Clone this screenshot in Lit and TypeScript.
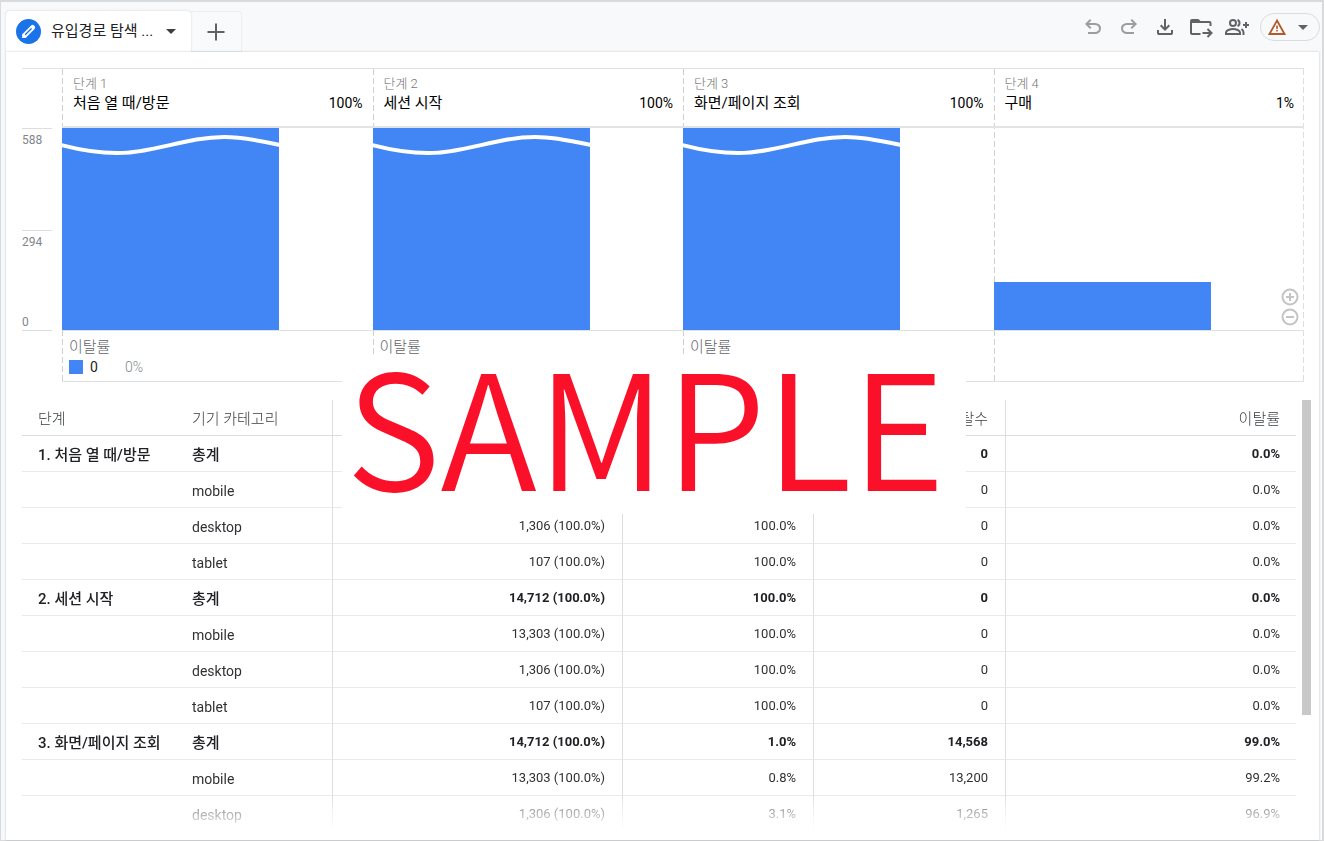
import { LitElement, html, css, svg } from "lit";
import { customElement } from "lit/decorators.js";
import { classMap } from "lit/directives/class-map.js";

interface Step {
  label: string;
  name: string;
  rate: string;
  height: number;
  wave: boolean;
  dropTitle?: string;
  dropCount?: string;
  dropRate?: string;
}

interface Row {
  step: string;
  device: string;
  users: string;
  completion: string;
  drops: string;
  dropRate: string;
}

const STEPS: Step[] = [
  { label: "단계 1", name: "처음 열 때/방문", rate: "100%", height: 100, wave: true, dropTitle: "이탈률", dropCount: "0", dropRate: "0%" },
  { label: "단계 2", name: "세션 시작", rate: "100%", height: 100, wave: true, dropTitle: "이탈률" },
  { label: "단계 3", name: "화면/페이지 조회", rate: "100%", height: 100, wave: true, dropTitle: "이탈률" },
  { label: "단계 4", name: "구매", rate: "1%", height: 24, wave: false },
];

const row = (step: string, device: string, users: string, completion: string, drops: string, dropRate: string): Row => ({
  step, device, users, completion, drops, dropRate,
});

const ROWS: Row[] = [
  row("1. 처음 열 때/방문", "총계", "", "", "0", "0.0%"),
  row("", "mobile", "", "", "0", "0.0%"),
  row("", "desktop", "1,306 (100.0%)", "100.0%", "0", "0.0%"),
  row("", "tablet", "107 (100.0%)", "100.0%", "0", "0.0%"),
  row("2. 세션 시작", "총계", "14,712 (100.0%)", "100.0%", "0", "0.0%"),
  row("", "mobile", "13,303 (100.0%)", "100.0%", "0", "0.0%"),
  row("", "desktop", "1,306 (100.0%)", "100.0%", "0", "0.0%"),
  row("", "tablet", "107 (100.0%)", "100.0%", "0", "0.0%"),
  row("3. 화면/페이지 조회", "총계", "14,712 (100.0%)", "1.0%", "14,568", "99.0%"),
  row("", "mobile", "13,303 (100.0%)", "0.8%", "13,200", "99.2%"),
  row("", "desktop", "1,306 (100.0%)", "3.1%", "1,265", "96.9%"),
];

const UNDO =
  "M280-200v-80h284q63 0 109.5-40T720-420q0-60-46.5-100T564-560H312l104 104-56 56-200-200 200-200 56 56-104 104h252q97 0 169.5 63T800-420q0 94-72.5 157T564-200H280Z";
const DOWNLOAD =
  "M480-320 280-520l56-58 104 104v-326h80v326l104-104 56 58-200 200ZM240-160q-33 0-56.5-23.5T160-240v-120h80v120h480v-120h80v120q0 33-23.5 56.5T720-160H240Z";

const symbol = (shape: unknown) => html`<svg class="icon" viewBox="0 -960 960 960" aria-hidden="true">${shape}</svg>`;
const glyph = (shape: unknown) => html`<svg class="icon" viewBox="0 0 24 24" aria-hidden="true">${shape}</svg>`;

const ICONS = {
  undo: symbol(svg`<path d=${UNDO}></path>`),
  redo: symbol(svg`<path transform="translate(960 0) scale(-1 1)" d=${UNDO}></path>`),
  download: symbol(svg`<path d=${DOWNLOAD}></path>`),
  folder: glyph(svg`
    <path fill="none" stroke="currentColor" stroke-width="2" stroke-linejoin="round"
      d="M11.500 19H3q-1 0-1-1V6q0-1 1-1H9l2 2h9.500q1 0 1 1v3"></path>
    <path d="M2 5h8l2 3H2z"></path>
    <path fill="none" stroke="currentColor" stroke-width="2" d="M13.500 18H22M18.500 14l4 4-4 4"></path>`),
  people: glyph(svg`
    <g fill="none" stroke="currentColor" stroke-width="2">
      <circle cx="8" cy="8" r="3"></circle>
      <path d="M1 19v-1.500c0-2 4-3.500 7-3.500s7 1.500 7 3.500V19z"></path>
      <path d="M12.500 5q2 .6 2 3t-2 3"></path>
      <path d="M16.500 14q2 1.500 2 3.500V20"></path>
      <path d="M21 7v6M18 10h6"></path>
    </g>`),
};

const caret = html`<svg class="caret" viewBox="0 0 10 5" aria-hidden="true"><path d="M0 0h10L5 5z"></path></svg>`;

@customElement("app-root")
export class AppRoot extends LitElement {
  static styles = css`
    :host {
      min-height: 100vh;
      box-sizing: border-box;
      border: 1px solid #d9dadb;
      border-top-width: 2px;
      border-right-width: 2px;
      background: #f8f9fa;
      color: #202124;
      font: 14px/20px Roboto, "Noto Sans CJK KR", sans-serif;
      padding: 0 2px 0 5px;
      display: flex;
      flex-direction: column;
    }
    * {
      box-sizing: border-box;
    }
    button {
      font: inherit;
      color: inherit;
      background: none;
      border: 0;
      padding: 0;
      display: flex;
      align-items: center;
      justify-content: center;
      cursor: pointer;
    }
    .icon {
      width: 24px;
      height: 24px;
      display: block;
      fill: currentColor;
    }
    .caret {
      width: 10px;
      height: 5px;
      display: block;
      fill: currentColor;
    }

    .topbar {
      display: flex;
      justify-content: space-between;
      align-items: flex-start;
      height: 50px;
    }
    .tabs {
      display: flex;
      align-self: flex-end;
      height: 41px;
    }
    .tab {
      width: 185px;
      padding: 0 15px 0 10px;
      justify-content: flex-start;
      gap: 10px;
      background: #fff;
      border-radius: 4px 4px 0 0;
      box-shadow: 0 0 2px rgba(60, 64, 67, 0.25);
      clip-path: inset(-2px -2px 0 -2px);
      font-size: 15px;
    }
    .tab span {
      padding-bottom: 2px;
    }
    .tab .caret {
      margin-left: auto;
      color: #3c4043;
    }
    .badge {
      width: 25px;
      height: 25px;
      flex: none;
    }
    .add {
      width: 51px;
      background: #f9fafb;
      border: 1px solid #eceef0;
      border-left: 0;
      border-radius: 0 4px 0 0;
      color: #5f6368;
    }
    .tools {
      display: flex;
      align-items: center;
      gap: 12px;
      padding-top: 11px;
      color: #5f6368;
    }
    .muted {
      color: #9a9da1;
    }
    .status {
      width: 60px;
      height: 28px;
      border: 1px solid #dadce0;
      border-radius: 14px;
      justify-content: space-between;
      padding: 0 11px 0 7px;
      margin-left: -1px;
    }
    .status .warn {
      width: 18px;
      height: 18px;
      color: #b45a2a;
    }

    .panel {
      flex: 1;
      position: relative;
      background: #fff;
      box-shadow: 0 0 2px rgba(60, 64, 67, 0.3);
      padding: 16px 8px 7px 16px;
      margin-right: 1px;
    }

    .funnel {
      display: grid;
      grid-template-columns: 40px 1fr;
      grid-template-rows: 60px 203px 51px;
      margin-right: 7px;
      position: relative;
    }
    .corner {
      border-top: 1px solid #e3e4e5;
    }
    .axis {
      grid-column: 1;
      grid-row: 2;
      margin-right: 10px;
      display: grid;
      grid-template-rows: 1fr 1fr;
      border-top: 1px solid #dcdddf;
      border-bottom: 1px solid #dcdddf;
      color: #80868b;
      font-size: 12px;
      line-height: 22px;
    }
    .axis-lower {
      display: flex;
      flex-direction: column;
      justify-content: space-between;
      border-top: 1px solid #dcdddf;
    }
    .axis-lower span:last-child {
      line-height: 16px;
    }
    .steps {
      grid-column: 2;
      grid-row: 1 / 4;
      display: grid;
      grid-template-columns: repeat(4, 1fr);
      border-top: 1px solid #dfe0e1;
      border-bottom: 1px solid #dfe0e1;
    }
    .step {
      display: grid;
      grid-template-rows: 59px 203px 1fr;
      background: repeating-linear-gradient(#cfcfcf 0 6px, transparent 6px 9px) left / 1px 100% no-repeat;
    }
    .step:last-child {
      background:
        repeating-linear-gradient(#cfcfcf 0 6px, transparent 6px 9px) left / 1px 100% no-repeat,
        repeating-linear-gradient(#dedede 0 6px, transparent 6px 9px) right / 1px 100% no-repeat;
    }
    .step-head {
      display: grid;
      grid-template-columns: 1fr auto;
      align-content: start;
      padding: 6px 10px 0 11px;
      border-bottom: 2px solid #e2e3e4;
      color: #000;
    }
    .step-label {
      grid-column: 1 / 3;
      font-size: 13px;
      font-weight: 300;
      line-height: 18px;
      color: #757575;
    }
    .step-name {
      font-size: 15px;
    }
    .plot {
      display: flex;
      align-items: flex-end;
      border-bottom: 1px solid #dfe0e1;
    }
    .bar {
      width: 70%;
      background: #4285f4;
    }
    .wave {
      display: block;
      width: 100%;
      height: 32px;
      fill: none;
      stroke: #fff;
      stroke-width: 4;
    }
    .step-foot {
      padding: 6px 7px 0;
    }
    .foot-title {
      font-size: 15px;
      font-weight: 300;
      color: #5f6368;
    }
    .legend {
      display: flex;
      align-items: center;
    }
    .swatch {
      width: 14px;
      height: 14px;
      margin-right: 7px;
      background: #4285f4;
    }
    .legend-rate {
      margin-left: 27px;
      color: #80868b;
      font-weight: 300;
    }
    .zoom {
      position: absolute;
      right: 5px;
      bottom: 56px;
      display: grid;
      gap: 2px;
      color: #c4c4c4;
    }
    .zoom svg {
      width: 18px;
      height: 18px;
      display: block;
      fill: none;
      stroke: currentColor;
      stroke-width: 2;
    }

    .table-area {
      display: flex;
      gap: 6px;
      margin-top: 18px;
    }
    .table-scroll {
      flex: 1;
      overflow: hidden;
      mask-image: linear-gradient(#000 396px, rgba(0, 0, 0, 0.45) 410px, transparent 431px);
    }
    table {
      width: 100%;
      table-layout: fixed;
      border-collapse: separate;
      border-spacing: 0;
    }
    .c-step { width: 154px; }
    .c-device { width: 157px; }
    .c-users { width: 290px; }
    .c-completion { width: 191px; }
    .c-drops { width: 192px; }
    .c-rate { width: 290px; }
    th, td {
      height: 36px;
      padding: 0 16px;
      border-bottom: 1px solid #e8eaed;
      font-weight: 400;
      text-align: left;
      white-space: nowrap;
    }
    th + th, td {
      border-right: 1px solid #dcdddf;
      padding-right: 17px;
    }
    th:last-child, td:last-child {
      border-right: 0;
      padding-right: 16px;
    }
    thead th {
      font-size: 15px;
      font-weight: 300;
      color: #3c4043;
      border-bottom-color: #dcdddf;
    }
    thead th, .ko {
      padding-top: 2px;
    }
    td {
      color: #303134;
    }
    .num {
      text-align: right;
    }
    tbody .num {
      font-size: 13px;
    }
    .total th, .total td {
      font-weight: 500;
      color: #202124;
    }
    .total .ko {
      font-size: 15px;
    }
    .total .num {
      font-weight: 700;
    }
    .thumb {
      width: 9px;
      height: 315px;
      background: #c8c8c8;
    }

    .stamp {
      position: absolute;
      left: 336px;
      top: 303px;
      width: 624px;
      height: 159px;
      padding-left: 4px;
      background: #fff;
      color: #fa1028;
      font: 350 160px/132px "Noto Sans CJK KR", sans-serif;
      white-space: nowrap;
    }
  `;

  private renderStep(step: Step) {
    return html`
      <section class="step">
        <div class="step-head">
          <span class="step-label">${step.label}</span>
          <span class="step-name">${step.name}</span>
          <span>${step.rate}</span>
        </div>
        <div class="plot">
          <div class="bar" style="height:${step.height}%">
            ${step.wave
              ? html`<svg class="wave" viewBox="0 0 217 32" preserveAspectRatio="none" aria-hidden="true">
                  <path d="M-1 17C18 22 36 25 55 25C92 25 124 9 162 9C181 9 199 13 218 17"></path>
                </svg>`
              : ""}
          </div>
        </div>
        <div class="step-foot">
          ${step.dropTitle ? html`<div class="foot-title">${step.dropTitle}</div>` : ""}
          ${step.dropCount
            ? html`<div class="legend">
                <span class="swatch"></span><span>${step.dropCount}</span>
                <span class="legend-rate">${step.dropRate}</span>
              </div>`
            : ""}
        </div>
      </section>
    `;
  }

  private renderRow(r: Row) {
    const total = r.device === "총계";
    return html`
      <tr class=${classMap({ total })}>
        <th scope="row" class="ko">${r.step}</th>
        <td class="ko">${r.device}</td>
        <td class="num">${r.users}</td>
        <td class="num">${r.completion}</td>
        <td class="num">${r.drops}</td>
        <td class="num">${r.dropRate}</td>
      </tr>
    `;
  }

  render() {
    return html`
      <header class="topbar">
        <div class="tabs">
          <button class="tab">
            <svg class="badge" viewBox="0 0 25 25" aria-hidden="true">
              <circle cx="12.500" cy="12.500" r="12.500" fill="#1a73e8"></circle>
              <path d="M8.800 16.200 16.600 8.400" stroke="#fff" stroke-width="5" stroke-linecap="round"></path>
              <path d="M6 19l.6-4.500 3.900 3.900z" fill="#fff"></path>
              <path d="M9.500 15.500 15.200 9.800" stroke="#1a73e8" stroke-width="1.300" stroke-linecap="round"></path>
            </svg>
            <span>유입경로 탐색 ...</span>
            ${caret}
          </button>
          <button class="add" aria-label="탭 추가">
            ${glyph(svg`<path d="M3.500 11h7.500V3.500h2V11h7.500v2H13v7.500h-2V13H3.500z"></path>`)}
          </button>
        </div>
        <div class="tools">
          <button class="muted" aria-label="실행취소">${ICONS.undo}</button>
          <button class="muted" aria-label="다시 실행">${ICONS.redo}</button>
          <button aria-label="다운로드">${ICONS.download}</button>
          <button aria-label="이동">${ICONS.folder}</button>
          <button aria-label="공유">${ICONS.people}</button>
          <button class="status" aria-label="데이터 상태">
            <svg class="warn" viewBox="0 0 18 18" aria-hidden="true">
              <path d="M9 2.500 16.500 16H1.500z" fill="none" stroke="currentColor" stroke-width="1.800"></path>
              <path d="M8.200 7.500h1.600v3.500H8.200zM8.200 12h1.600v1.600H8.200z" fill="currentColor"></path>
            </svg>
            ${caret}
          </button>
        </div>
      </header>

      <main class="panel">
        <div class="funnel">
          <div class="corner"></div>
          <div class="axis">
            <span>588</span>
            <div class="axis-lower"><span>294</span><span>0</span></div>
          </div>
          <div class="steps">${STEPS.map((s) => this.renderStep(s))}</div>
          <div class="zoom">
            <button aria-label="확대">
              <svg viewBox="0 0 18 18"><circle cx="9" cy="9" r="7.500"></circle><path d="M5 9h8M9 5v8"></path></svg>
            </button>
            <button aria-label="축소">
              <svg viewBox="0 0 18 18"><circle cx="9" cy="9" r="7.500"></circle><path d="M5 9h8"></path></svg>
            </button>
          </div>
        </div>

        <div class="table-area">
          <div class="table-scroll">
            <table>
              <colgroup>
                <col class="c-step" /><col class="c-device" /><col class="c-users" />
                <col class="c-completion" /><col class="c-drops" /><col class="c-rate" />
              </colgroup>
              <thead>
                <tr>
                  <th scope="col">단계</th>
                  <th scope="col">기기 카테고리</th>
                  <th scope="col" class="num"></th>
                  <th scope="col" class="num"></th>
                  <th scope="col" class="num">이탈수</th>
                  <th scope="col" class="num">이탈률</th>
                </tr>
              </thead>
              <tbody>
                ${ROWS.map((r) => this.renderRow(r))}
              </tbody>
            </table>
          </div>
          <div class="thumb"></div>
        </div>

        <div class="stamp">SAMPLE</div>
      </main>
    `;
  }
}
